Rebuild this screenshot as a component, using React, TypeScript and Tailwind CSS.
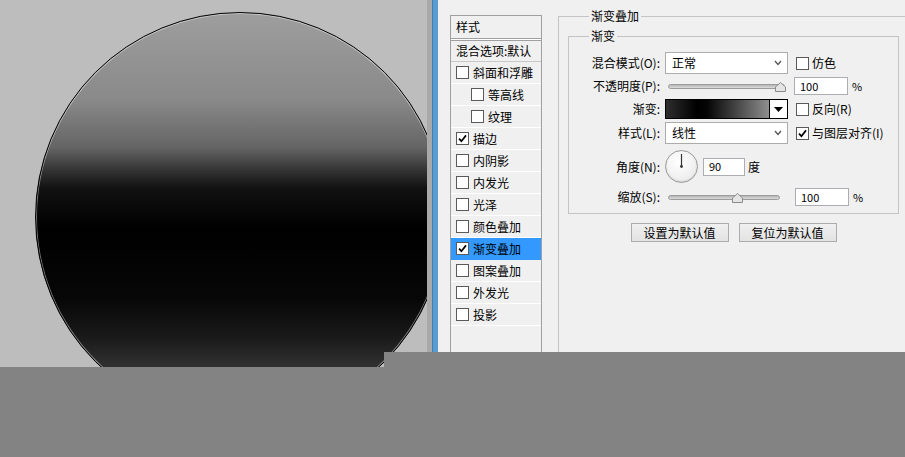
import React from 'react';

type Item = { label: string; checked?: boolean; indent?: boolean; active?: boolean };

const items: Item[] = [
  { label: '斜面和浮雕' },
  { label: '等高线', indent: true },
  { label: '纹理', indent: true },
  { label: '描边', checked: true },
  { label: '内阴影' },
  { label: '内发光' },
  { label: '光泽' },
  { label: '颜色叠加' },
  { label: '渐变叠加', checked: true, active: true },
  { label: '图案叠加' },
  { label: '外发光' },
  { label: '投影' },
];

function CheckBox({ checked }: { checked?: boolean }) {
  return (
    <span className="flex h-[13px] w-[13px] shrink-0 items-center justify-center border border-[#5a5a5a] bg-white">
      {checked && (
        <svg width="9" height="9" viewBox="0 0 9 9">
          <path d="M1 4.6 L3.4 7.2 L8 1.4" fill="none" stroke="#000" strokeWidth="1.7" />
        </svg>
      )}
    </span>
  );
}

function Chevron() {
  return (
    <svg width="8" height="6" viewBox="0 0 8 6">
      <path d="M1 1 L4 4.5 L7 1" fill="none" stroke="#555" strokeWidth="1.3" />
    </svg>
  );
}

function Select({ value }: { value: string }) {
  return (
    <div className="flex h-[22px] w-[123px] items-center justify-between border border-[#acacac] bg-white pl-[6px] pr-[5px]">
      <span>{value}</span>
      <Chevron />
    </div>
  );
}

function Thumb() {
  return (
    <svg width="11" height="10" viewBox="0 0 11 10">
      <path d="M5.5 0.5 L10.5 5 L10.5 9.5 L0.5 9.5 L0.5 5 Z" fill="#e4e4e4" stroke="#8a8a8a" />
    </svg>
  );
}

function Slider({ trackW, thumbLeft }: { trackW: string; thumbLeft: string }) {
  return (
    <div className="relative flex h-full w-[123px] items-center">
      <div className={`ml-[3px] h-[5px] rounded-full border border-[#9c9c9c] bg-[linear-gradient(to_bottom,#b5b5b5,#dcdcdc)] ${trackW}`} />
      <div className={`absolute top-[50%] mt-[-4px] flex ${thumbLeft}`}>
        <Thumb />
      </div>
    </div>
  );
}

function Field({ value, w }: { value: string; w: string }) {
  return (
    <div className={`flex h-[18px] items-center border border-[#abadb3] bg-white pl-[5px] text-[11px] ${w}`}>
      {value}
    </div>
  );
}

function Row({ label, children, cls }: { label: string; children: React.ReactNode; cls: string }) {
  return (
    <div className={`flex items-center ${cls}`}>
      <div className="w-[91px] shrink-0 text-right">{label}</div>
      <div className="ml-[5px] flex h-full items-center">{children}</div>
    </div>
  );
}

function Option({ label, checked }: { label: string; checked?: boolean }) {
  return (
    <div className="ml-[8px] flex items-center gap-[3px]">
      <CheckBox checked={checked} />
      <span>{label}</span>
    </div>
  );
}

function Canvas() {
  return (
    <div className="relative h-[367px] w-[427px] shrink-0 overflow-hidden bg-[#bdbdbd]">
      <div className="absolute left-[35px] top-[12px] h-[410px] w-[410px] rounded-full border-[1.5px] border-black bg-[linear-gradient(to_bottom,#9e9e9e_0%,#8a8a8a_21%,#646464_33%,#343434_38.5%,#111_43%,#000_53%,#070707_70%,#1b1b1b_80%,#2f2f2f_86%,#444_100%)] shadow-[inset_0_0_0_1px_rgba(255,255,255,0.45)]" />
      <div className="absolute left-[384px] top-[352px] h-[15px] w-[43px] bg-[#838383]" />
    </div>
  );
}

function StyleList() {
  return (
    <div className="mt-[15px] h-[400px] w-[92px] shrink-0 border border-[#a0a0a0] bg-[#f0f0f0]">
      <div className="flex h-[22px] items-center pl-[5px]">样式</div>
      <div className="h-[3px] border-y border-[#a0a0a0] bg-white" />
      <div className="flex h-[21px] items-center overflow-hidden whitespace-nowrap border-b border-[#c8c8c8] pl-[5px]">
        混合选项:默认
      </div>
      {items.map((it) => (
        <div
          key={it.label}
          className={`flex h-[22px] items-center gap-[4px] border-b ${
            it.active ? 'border-[#3399ff] bg-[#3399ff]' : 'border-white'
          } ${it.indent ? 'pl-[20px]' : 'pl-[5px]'}`}
        >
          <CheckBox checked={it.checked} />
          <span>{it.label}</span>
        </div>
      ))}
    </div>
  );
}

function GradientOverlay() {
  return (
    <fieldset className="ml-[16px] mt-[8px] h-[400px] flex-1 border-l border-t border-[#c4c4c4] pl-[9px]">
      <legend className="ml-[21px] px-[2px] leading-[16px]">渐变叠加</legend>
      <fieldset className="mt-[4px] w-[331px] border border-[#c4c4c4] pb-[7px]">
        <legend className="ml-[20px] px-[2px] leading-[16px]">渐变</legend>
        <Row label="混合模式(O):" cls="mt-[8px] h-[22px]">
          <Select value="正常" />
          <Option label="仿色" />
        </Row>
        <Row label="不透明度(P):" cls="h-[24px]">
          <Slider trackW="w-[117px]" thumbLeft="left-[110px]" />
          <div className="ml-[6px]">
            <Field value="100" w="w-[54px]" />
          </div>
          <span className="ml-[4px] text-[11px]">%</span>
        </Row>
        <Row label="渐变:" cls="mt-[1px] h-[20px]">
          <div className="flex h-[20px] w-[123px] border border-black bg-white">
            <div className="flex-1 border-r border-black bg-[linear-gradient(to_right,#2e2e2e_0%,#000_30%,#050505_40%,#8e8e8e_100%)]" />
            <div className="flex w-[17px] items-center justify-center">
              <svg width="9" height="5" viewBox="0 0 9 5">
                <path d="M0 0 L9 0 L4.5 5 Z" fill="#000" />
              </svg>
            </div>
          </div>
          <Option label="反向(R)" />
        </Row>
        <Row label="样式(L):" cls="mt-[3px] h-[22px]">
          <Select value="线性" />
          <Option label="与图层对齐(I)" checked />
        </Row>
        <Row label="角度(N):" cls="mt-[6px] h-[33px]">
          <div className="relative h-[33px] w-[33px] rounded-full border border-[#9a9a9a] bg-[radial-gradient(circle_at_40%_35%,#ffffff,#e6e6e6)] shadow-[inset_0_-1px_2px_rgba(0,0,0,0.12)]">
            <svg className="absolute left-0 top-0" width="31" height="31" viewBox="0 0 31 31">
              <line x1="15.5" y1="15.5" x2="15.5" y2="3" stroke="#333" strokeWidth="1.2" />
              <circle cx="15.5" cy="15.5" r="1.4" fill="#333" />
            </svg>
          </div>
          <div className="ml-[5px]">
            <Field value="90" w="w-[42px]" />
          </div>
          <span className="ml-[3px]">度</span>
        </Row>
        <Row label="缩放(S):" cls="mt-[5px] h-[18px]">
          <Slider trackW="w-[112px]" thumbLeft="left-[67px]" />
          <div className="ml-[7px]">
            <Field value="100" w="w-[54px]" />
          </div>
          <span className="ml-[4px] text-[11px]">%</span>
        </Row>
      </fieldset>
      <div className="mt-[9px] flex w-[331px] justify-center gap-[10px]">
        <button className="h-[19px] w-[98px] border border-[#acacac] bg-[linear-gradient(to_bottom,#f0f0f0,#e3e3e3)] leading-[17px]">
          设置为默认值
        </button>
        <button className="h-[19px] w-[98px] border border-[#acacac] bg-[linear-gradient(to_bottom,#f0f0f0,#e3e3e3)] leading-[17px]">
          复位为默认值
        </button>
      </div>
    </fieldset>
  );
}

export default function App() {
  return (
    <div className="h-[457px] w-[905px] overflow-hidden bg-[#838383] font-['Noto_Sans_CJK_SC','Noto_Sans',sans-serif] text-[12px] text-black">
      <div className="flex items-start">
        <Canvas />
        <div className="h-[352px] w-[5px] shrink-0 bg-[#a9a9a9]" />
        <div className="h-[352px] w-[6px] shrink-0 border-l border-[#3f7fb5] bg-[#5b9bd0]" />
        <div className="flex h-[352px] flex-1 items-start overflow-hidden bg-[#f0f0f0] pl-[12px]">
          <StyleList />
          <GradientOverlay />
        </div>
      </div>
    </div>
  );
}
